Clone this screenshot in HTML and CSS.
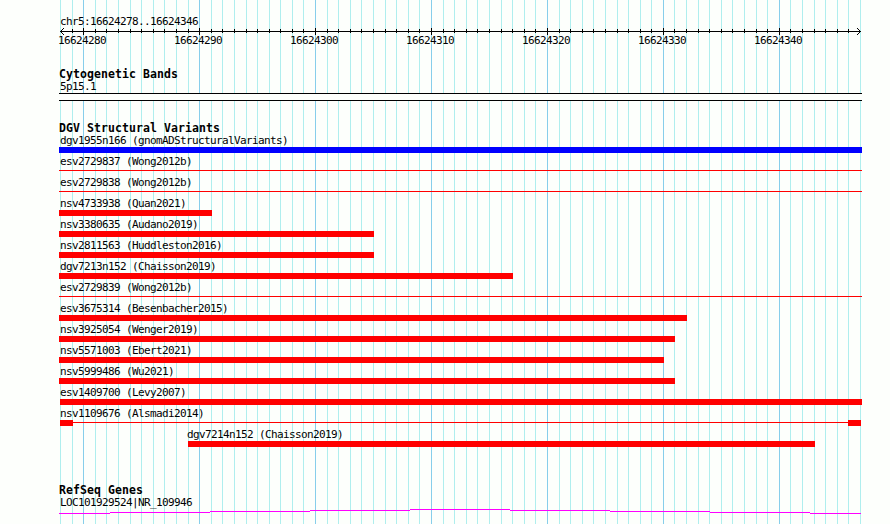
FILE: index.html
```html
<!DOCTYPE html>
<html lang="en">
<head>
    <meta charset="UTF-8">
    <meta name="viewport" content="width=device-width, initial-scale=1.0">
    <title>chr5:16624278..16624346</title>
    <link rel="stylesheet" href="styles.css">
</head>
<body>
    <div class="browser">
        <svg id="grid" class="grid" width="890" height="524" shape-rendering="crispEdges"></svg>

        <div class="panel">
            <div class="region">chr5:16624278..16624346</div>
            <svg id="ruler" class="ruler" width="803" height="9" shape-rendering="crispEdges"></svg>
            <div class="scale">
                <span>16624280</span>
                <span>16624290</span>
                <span>16624300</span>
                <span>16624310</span>
                <span>16624320</span>
                <span>16624330</span>
                <span>16624340</span>
            </div>

            <section class="cytoband">
                <h2>Cytogenetic Bands</h2>
                <div class="label">5p15.1</div>
                <div class="band"></div>
            </section>

            <section class="variants">
                <h2>DGV Structural Variants</h2>
                <div id="variants"></div>
            </section>

            <section class="genes">
                <h2>RefSeq Genes</h2>
                <div class="label">LOC101929524|NR_109946</div>
                <svg class="gene" width="803" height="5" shape-rendering="crispEdges">
                    <path d="M0 4h51v1H0zM51 3h100v1H51zM151 2h100v1H151zM251 1h100v1H251zM351 0h100v1H351zM451 1h100v1H451zM551 2h100v1H551zM651 3h100v1H651zM751 4h51v1H751z"/>
                </svg>
            </section>
        </div>
    </div>

    <script>
        // start and end are pixels inside the panel
        const variants = [
            { name: 'dgv1955n166 (gnomADStructuralVariants)', start: 0, end: 803, type: 'gain' },
            { name: 'esv2729837 (Wong2012b)', start: 0, end: 803, type: 'thin' },
            { name: 'esv2729838 (Wong2012b)', start: 0, end: 803, type: 'thin' },
            { name: 'nsv4733938 (Quan2021)', start: 0, end: 153 },
            { name: 'nsv3380635 (Audano2019)', start: 0, end: 315 },
            { name: 'nsv2811563 (Huddleston2016)', start: 0, end: 315 },
            { name: 'dgv7213n152 (Chaisson2019)', start: 0, end: 454 },
            { name: 'esv2729839 (Wong2012b)', start: 0, end: 803, type: 'thin' },
            { name: 'esv3675314 (Besenbacher2015)', start: 0, end: 628 },
            { name: 'nsv3925054 (Wenger2019)', start: 0, end: 616 },
            { name: 'nsv5571003 (Ebert2021)', start: 0, end: 605 },
            { name: 'nsv5999486 (Wu2021)', start: 0, end: 616 },
            { name: 'esv1409700 (Levy2007)', start: 1, end: 803 },
            { name: 'nsv1109676 (Alsmadi2014)', start: 1, end: 802, type: 'ends' },
            { name: 'dgv7214n152 (Chaisson2019)', start: 129, end: 756, indent: 127 }
        ];

        function drawGrid() {
            let lines = '';
            let ticks = '<path d="M1 4h801v1H1z"/>';
            for (let i = 0; i < 70; i++) {
                const x = Math.round(60 + i * 800 / 69);
                const major = i % 10 === 2;
                lines += `<rect class="${major ? 'major' : 'minor'}" x="${x}" y="0" width="1" height="524"/>`;
                if (i > 0 && i < 69) {
                    ticks += `<rect x="${x - 59}" y="${major ? 1 : 2}" width="1" height="${major ? 7 : 4}"/>`;
                }
            }
            ticks += '<path d="M2 3h1v3H2zM3 2h1v1H3zM3 6h1v1H3zM4 1h1v1H4zM4 7h1v1H4z"/>';
            ticks += '<path d="M800 3h1v3h-1zM799 2h1v1h-1zM799 6h1v1h-1zM798 1h1v1h-1zM798 7h1v1h-1z"/>';
            document.getElementById('grid').innerHTML = lines;
            document.getElementById('ruler').innerHTML = ticks;
        }

        function drawVariants() {
            document.getElementById('variants').innerHTML = variants.map(v =>
                `<div class="variant">
                    <div class="label" style="margin-left:${v.indent || 0}px">${v.name}</div>
                    <div class="bar ${v.type || 'loss'}" style="margin-left:${v.start}px;width:${v.end - v.start}px"></div>
                </div>`
            ).join('');
        }

        drawGrid();
        drawVariants();
    </script>
</body>
</html>
```
FILE: styles.css
```css
body {
    margin: 0;
    background-color: #fdfffc;
    color: #000;
    font-family: "DejaVu Sans Mono", monospace;
    font-size: 11px;
    letter-spacing: -0.622px;
    line-height: 17px;
}
.browser {
    position: relative;
    width: 890px;
    height: 524px;
    overflow: hidden;
}
.grid {
    position: absolute;
    top: 0;
    left: 0;
}
.minor {
    fill: #afeeee;
}
.major {
    fill: #87ceeb;
}
.panel {
    position: relative;
    width: 803px;
    padding: 13px 0 0 59px;
}
.region, .label {
    height: 15px;
    padding-left: 1px;
    white-space: nowrap;
}
.region {
    height: 14px;
}
.ruler {
    display: block;
}
.scale {
    display: flex;
    height: 15px;
    margin: -4px 0 0 -1px;
}
.scale span {
    flex: none;
    width: 116px;
}
h2 {
    margin: 0;
    height: 12px;
    font-size: 11.5px;
    line-height: 17px;
    letter-spacing: 0.077px;
    font-weight: bold;
}
.cytoband {
    padding-top: 19px;
}
.band {
    box-sizing: border-box;
    height: 8px;
    border: solid #000;
    border-width: 1px 0;
    background-color: #fdfffc;
}
.variants {
    padding-top: 19px;
}
.variant {
    height: 21px;
}
.bar {
    height: 6px;
    box-sizing: border-box;
    background-color: #f00;
}
.bar.gain {
    background-color: #00f;
}
.bar.thin {
    height: 3px;
    border-top: 2px solid transparent;
    background-clip: padding-box;
}
.bar.ends {
    background: linear-gradient(#f00, #f00) left / 13px 6px no-repeat,
        linear-gradient(#f00, #f00) right / 13px 6px no-repeat,
        linear-gradient(#f00, #f00) 0 2px / 100% 1px no-repeat;
}
.genes {
    padding-top: 35px;
}
.gene {
    display: block;
    fill: #f0f;
}
```
